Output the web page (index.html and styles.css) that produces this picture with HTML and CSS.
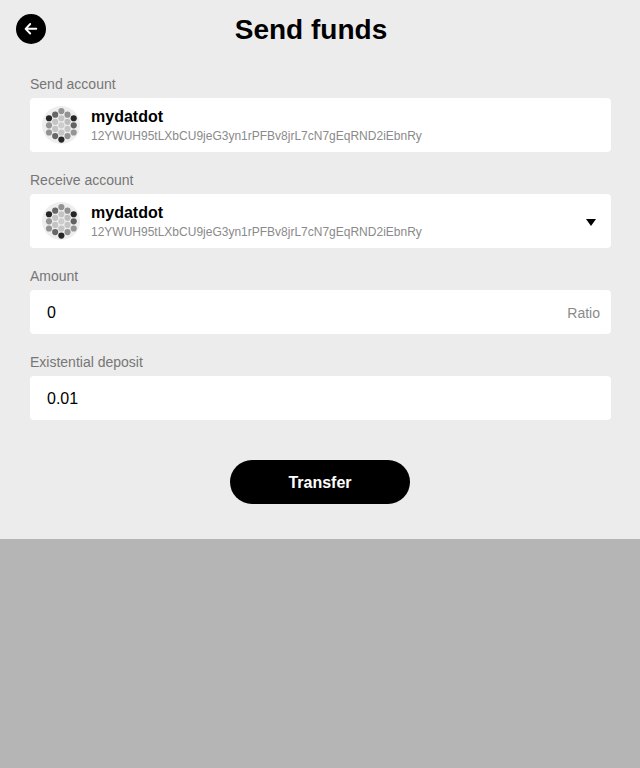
FILE: index.html
```html
<!DOCTYPE html>
<html lang="en">
<head>
<meta charset="utf-8">
<title>Send funds</title>
<link rel="stylesheet" href="styles.css">
</head>
<body>
<svg class="defs" aria-hidden="true">
  <symbol id="identicon" viewBox="0 0 64 64">
    <circle cx="32" cy="32" r="32" fill="#eee"/>
    <g transform="translate(.6 .6)">
      <circle cx="32" cy="8" r="5.2" fill="#929292"/>
      <circle cx="32" cy="20" r="5.2" fill="#c4c4c4"/>
      <circle cx="21.6" cy="14" r="5.2" fill="#676767"/>
      <circle cx="11.2" cy="20" r="5.2" fill="#262626"/>
      <circle cx="21.6" cy="26" r="5.2" fill="#c4c4c4"/>
      <circle cx="11.2" cy="32" r="5.2" fill="#959595"/>
      <circle cx="11.2" cy="44" r="5.2" fill="#929292"/>
      <circle cx="21.6" cy="38" r="5.2" fill="#c4c4c4"/>
      <circle cx="21.6" cy="50" r="5.2" fill="#676767"/>
      <circle cx="32" cy="56" r="5.2" fill="#262626"/>
      <circle cx="32" cy="44" r="5.2" fill="#c4c4c4"/>
      <circle cx="42.4" cy="50" r="5.2" fill="#929292"/>
      <circle cx="52.8" cy="44" r="5.2" fill="#959595"/>
      <circle cx="42.4" cy="38" r="5.2" fill="#c4c4c4"/>
      <circle cx="52.8" cy="32" r="5.2" fill="#626262"/>
      <circle cx="52.8" cy="20" r="5.2" fill="#262626"/>
      <circle cx="42.4" cy="26" r="5.2" fill="#bdbdbd"/>
      <circle cx="42.4" cy="14" r="5.2" fill="#929292"/>
      <circle cx="32" cy="32" r="5.2" fill="#ccc"/>
    </g>
  </symbol>
</svg>
<main class="panel">
  <header class="header">
    <button class="back" aria-label="Back">
      <svg viewBox="0 0 30 30"><path d="M20.3 14.8H10M14.2 10L9.6 14.8L14.2 19.5" fill="none" stroke="#fff" stroke-width="1.9" stroke-linecap="round" stroke-linejoin="round"/></svg>
    </button>
    <h1 class="title">Send funds</h1>
  </header>
  <form class="form">
    <div class="label">Send account</div>
    <div class="box account">
      <svg class="avatar"><use href="#identicon"/></svg>
      <div class="details">
        <div class="name">mydatdot</div>
        <div class="address">12YWUH95tLXbCU9jeG3yn1rPFBv8jrL7cN7gEqRND2iEbnRy</div>
      </div>
    </div>
    <div class="label">Receive account</div>
    <div class="box account">
      <svg class="avatar"><use href="#identicon"/></svg>
      <div class="details">
        <div class="name">mydatdot</div>
        <div class="address">12YWUH95tLXbCU9jeG3yn1rPFBv8jrL7cN7gEqRND2iEbnRy</div>
      </div>
      <svg class="arrow" viewBox="0 0 10 7"><path d="M0 0H10L5 7Z"/></svg>
    </div>
    <div class="label">Amount</div>
    <div class="box field"><span>0</span><span class="unit">Ratio</span></div>
    <div class="label">Existential deposit</div>
    <div class="box field"><span>0.01</span></div>
    <button class="submit" type="button">Transfer</button>
  </form>
</main>
</body>
</html>
```
FILE: styles.css
```css
* { box-sizing: border-box; }
body {
  margin: 0;
  min-height: 768px;
  background: #b5b5b5;
  font-family: "Liberation Sans", Arial, sans-serif;
  color: #000;
}
.defs { display: none; }
.panel { height: 539px; background: #ececec; }
.header {
  display: grid;
  grid-template-columns: 30px 1fr 30px;
  align-items: center;
  height: 58px;
  padding: 0 16px;
}
.back {
  width: 30px;
  height: 30px;
  padding: 0;
  border: 0;
  border-radius: 50%;
  background: #000;
}
.back svg { display: block; width: 30px; height: 30px; }
.title {
  margin: 0;
  padding: 2px 18px 0 0;
  text-align: center;
  font-size: 28px;
  line-height: 32px;
}
.form {
  display: flex;
  flex-direction: column;
  padding: 18px 29px 0 30px;
}
.label {
  height: 22px;
  line-height: 17px;
  font-size: 14px;
  color: #767676;
}
.box {
  display: flex;
  align-items: center;
  margin-bottom: 20px;
  border-radius: 4px;
  background: #fff;
}
.account { height: 54px; padding: 0 15px 0 12px; }
.avatar { width: 38px; height: 38px; margin-right: 11px; }
.details { flex: 1; }
.name {
  height: 20px;
  line-height: 20px;
  font-size: 16px;
  font-weight: bold;
}
.address {
  height: 17px;
  line-height: 19px;
  font-size: 12px;
  color: #8a8a8a;
}
.arrow { width: 10px; height: 7px; margin-top: 3px; }
.field {
  justify-content: space-between;
  height: 44px;
  padding: 1px 11px 0 17px;
  font-size: 16px;
}
.unit { padding-top: 1px; font-size: 14px; color: #8a8a8a; }
.submit {
  align-self: center;
  width: 180px;
  height: 44px;
  margin: 20px 1px 0 0;
  padding: 2px 0 0;
  border: 0;
  border-radius: 22px;
  background: #000;
  color: #fff;
  font: bold 16px "Liberation Sans", Arial, sans-serif;
}
```
